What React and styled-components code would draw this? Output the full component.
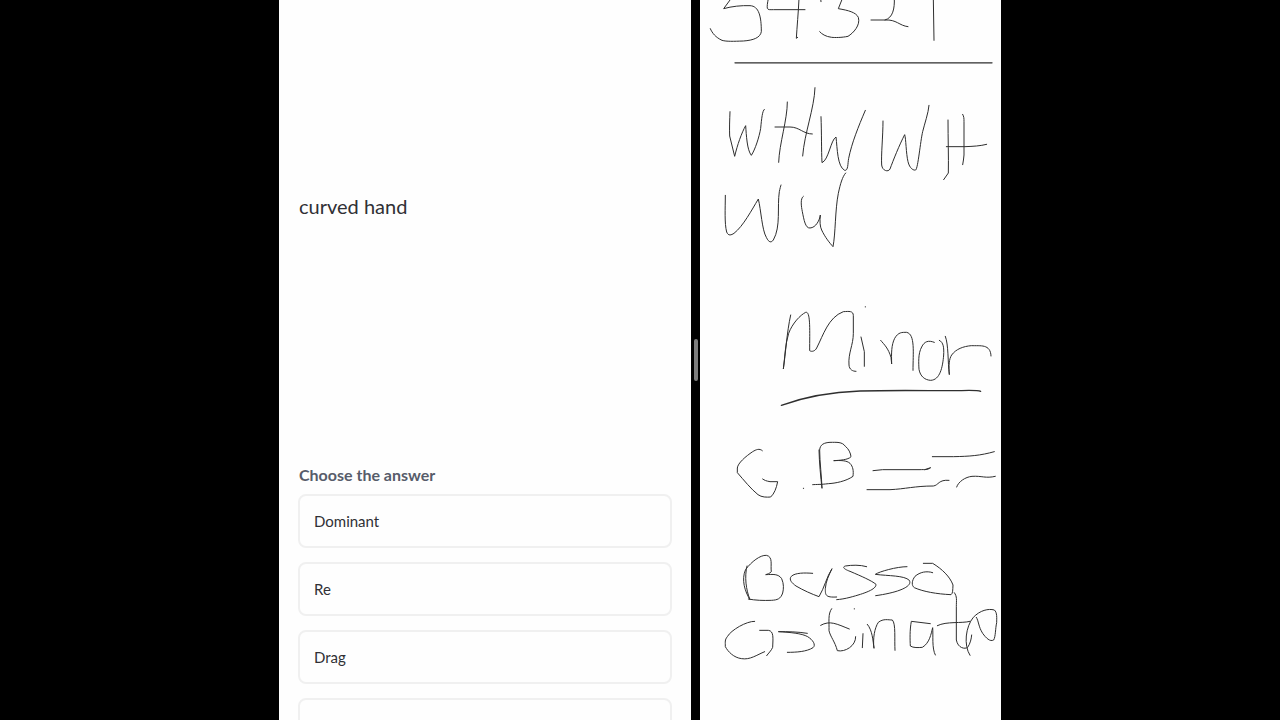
import styled, { createGlobalStyle } from "styled-components";

const GlobalStyle = createGlobalStyle`
  * {
    box-sizing: border-box;
  }

  body {
    margin: 0;
    background: #000;
    font-family: Lato, "Open Sans", sans-serif;
  }
`;

const Wrapper = styled.main`
  display: grid;
  grid-template-columns: 412fr 9px 301fr;
  max-width: 722px;
  height: 100vh;
  margin: 0 auto;
  overflow: hidden;
`;

const Pane = styled.section`
  min-width: 0;
  overflow: hidden;
  background: #fefefe;
`;

const Question = styled(Pane)`
  padding: 0 19px;
`;

const Prompt = styled.div`
  display: flex;
  align-items: center;
  min-height: 412px;
  padding-left: 1px;
  color: #303035;
  font-size: 20px;
  line-height: 24px;
`;

const Title = styled.h2`
  margin: 0;
  padding: 51px 0 7px 1px;
  color: #575c6a;
  font-size: 16px;
  font-weight: 700;
  line-height: 24px;
`;

const Options = styled.div`
  display: flex;
  flex-direction: column;
  gap: 14px;
`;

const Option = styled.button`
  height: 54px;
  flex-shrink: 0;
  padding: 0 14px;
  border: 2px solid #f0f0f0;
  border-radius: 8px;
  background: #fefefe;
  color: #303035;
  font-family: inherit;
  font-size: 15px;
  line-height: 20px;
  text-align: left;
  cursor: pointer;
`;

const Divider = styled.div`
  display: flex;
  align-items: center;
  justify-content: center;
  background: #000;
`;

const Handle = styled.div`
  width: 4px;
  height: 42px;
  border-radius: 2px;
  background: #7d7d7d;
`;

const Ink = styled.svg`
  display: block;
  width: 100%;
  fill: none;
  stroke: #2e2e2e;
  stroke-linecap: round;
  stroke-linejoin: round;
`;

const options = ["Dominant", "Re", "Drag", "Legato"];

// pen strokes of the notes, one entry for each written line
const notes = [
  {
    name: "54321",
    x: -45,
    y: 0,
    strokes: [
      "M138 -4L116 26C140 19 170 16 195 17C222 18 229 50 229 95C226 113 205 121 175 123C145 124 125 125 111 121C92 112 82 100 76 86",
      "M250 -4C247 10 246 20 247 25C249 30 255 29 265 29H360M342 -4C340 40 336 80 334 115L338 112",
      "M407 -4L408 5M472 -4L460 26C490 31 513 37 520 52C527 76 505 99 489 109C470 113 450 113 440 112C422 110 410 102 404 95",
      "M628 -4C629 25 624 54 600 60M558 60H600C635 58 642 77 669 80",
      "M745 -4L747 121",
    ],
  },
  {
    name: "rule",
    x: -45,
    y: 0,
    strokes: ["M150 188.500H921"],
    weight: 4,
  },
  {
    name: "WHW",
    x: 0,
    y: 240,
    strokes: [
      "M90 95C89 120 88 145 89 168L104 229C112 195 125 158 137 137C139 165 141 210 154 226C165 210 178 170 182 145C185 115 187 92 193 88",
      "M262 66C262 120 238 190 236 247M345 23C343 85 313 160 308 228M225 141H270C298 141 310 162 337 162",
      "M363 110C365 160 364 210 366 248C386 240 392 180 408 171C412 205 412 260 434 271C445 273 443 250 446 235C455 190 475 140 496 91",
    ],
  },
  {
    name: "WH",
    x: 450,
    y: 240,
    strokes: [
      "M99 123C99 170 93 225 95 255C97 273 115 277 120 267C130 240 148 195 164 164C168 175 168 220 174 245C179 266 191 272 197 270C204 265 211 185 218 155C224 130 235 100 237 76",
      "M294 120C294 175 296 230 295 279L281 299M338 103C342 110 342 115 342 125V225C342 235 339 245 338 254M289 200H345C370 199 390 198 410 193",
    ],
  },
  {
    name: "WW",
    x: 0,
    y: 240,
    strokes: [
      "M76 346C76 385 73 430 80 456C85 469 94 465 102 460C130 438 155 390 175 357C183 390 186 450 199 472C207 489 214 488 220 480C243 440 231 380 238 335C240 325 242 318 243 315",
      "M310 349C300 355 304 380 307 395C312 420 316 445 330 444C348 443 359 420 361 405C359 425 360 440 365 450C375 472 390 490 399 500C407 460 405 390 415 340C421 312 427 290 437 279",
    ],
  },
  {
    name: "Minor",
    x: 195,
    y: 870,
    strokes: [
      "M77 75C65 130 62 190 55 237C60 200 60 165 71 130C82 100 106 75 122 67C137 63 134 120 134 182C140 186 150 184 155 174C175 135 190 82 235 65C252 64 265 62 265 77V130C265 165 249 190 252 225C253 239 263 244 273 244",
      "M288 141L298 185V229M301 50V51",
      "M347 151C358 164 370 175 378 202L380 222C379 190 379 165 389 145C400 126 411 127 425 127C451 133 444 188 444 241",
      "M508 157C490 150 478 154 470 171C459 190 461 220 462 238C466 260 480 270 497 271C525 270 533 232 536 195C537 174 536 157 523 151",
      "M541 139C551 165 548 215 553 254C551 226 552 207 560 195C573 177 595 169 619 167C646 168 677 161 678 198",
    ],
  },
  {
    name: "underline",
    x: 195,
    y: 870,
    strokes: [
      "M49 346C115 322 200 306 285 303C380 300 480 302 575 302C620 301 638 300 647 304",
    ],
    weight: 4,
  },
  {
    name: "GB",
    x: 60,
    y: 1290,
    strokes: [
      "M127 62C118 54 108 59 98 65C77 79 53 100 52 114V128C72 151 93 177 114 194C125 202 140 202 152 201C163 191 169 175 173 155H150C138 153 134 151 128 147",
      "M250 175H251M297 60C298 100 302 140 306 175C305 140 299 95 299 60C300 43 313 38 330 37C350 37 367 35 376 49C386 56 392 70 393 80C385 90 357 91 341 92C362 91 380 91 390 100C399 110 401 122 399 139C378 154 345 160 325 161C302 164 290 163 278 164",
      "M459 122L488 119H600C615 118 620 121 632 113L614 119M441 179H510C555 177 585 168 640 168C656 166 655 148 687 151",
      "M637 80H700C750 79 780 77 823 65M710 171C715 155 736 141 756 139C785 137 797 146 826 139",
    ],
  },
  {
    name: "Ba",
    x: 45,
    y: 1620,
    strokes: [
      "M96 78C88 110 93 150 105 179C90 155 78 119 92 88C110 65 135 45 154 46C175 50 166 75 169 95C163 101 158 102 152 104C174 103 190 101 200 116C207 132 206 147 203 159C197 177 187 180 169 181C145 182 120 181 100 177",
      "M293 100C270 98 240 98 229 109C220 119 232 130 243 138C265 151 290 162 312 170C328 144 335 110 351 86C341 107 333 123 331 145C331 165 330 173 365 171",
    ],
  },
  {
    name: "sso",
    x: 450,
    y: 1620,
    strokes: [
      "M50 80C30 74 5 75 -14 78C-26 82 -14 89 0 94C35 109 65 122 78 133C79 148 45 160 0 172C-15 176 -28 178 -40 179",
      "M171 80C140 80 87 95 76 103C115 108 163 106 178 121C189 140 143 158 77 167",
      "M248 98C230 92 210 96 195 109C185 122 184 137 193 143C220 155 260 162 303 164C309 160 308 150 309 135C300 110 276 87 248 70H220",
    ],
  },
  {
    name: "Osti",
    x: 45,
    y: 1620,
    strokes: [
      "M119 244C95 243 48 270 37 290C29 300 31 305 31 320C39 335 56 353 80 356C105 360 125 345 149 335M134 271H160C177 273 174 295 173 322C169 332 160 340 155 347",
      "M277 280C247 275 220 275 190 275C225 277 260 280 278 290C293 299 304 315 294 323C275 335 245 337 217 337",
      "M350 206C338 222 343 245 342 272C346 290 360 305 367 332C390 337 423 318 422 290M317 256C345 240 365 252 403 267",
      "M444 281L442 323M418 206V207",
    ],
  },
  {
    name: "nato",
    x: 450,
    y: 1620,
    strokes: [
      "M52 253C67 270 69 302 72 325C68 296 74 263 85 247C100 235 115 240 127 240C138 251 133 299 135 331",
      "M241 251L184 244C179 270 180 300 181 318C190 324 205 323 217 322C239 309 243 282 248 263C250 285 245 325 256 345",
      "M313 158C322 170 319 180 319 200V300C324 325 345 328 353 322C361 310 364 297 365 285M262 257C290 243 335 251 360 244",
      "M360 346C340 315 347 260 370 232C390 211 415 205 433 210C442 217 440 235 440 248C436 265 437 290 431 300C420 306 408 294 398 280C385 260 386 242 379 232",
    ],
  },
];

const Notes = () => (
  <Ink viewBox="0 0 903 2160" role="img" aria-label="Handwritten notes">
    {notes.map(({ name, x, y, strokes, weight = 3 }) => (
      <g key={name} transform={`translate(${x} ${y})`} strokeWidth={weight}>
        {strokes.map((d) => (
          <path key={d} d={d} />
        ))}
      </g>
    ))}
  </Ink>
);

const App = () => (
  <>
    <GlobalStyle />
    <Wrapper>
      <Question>
        <Prompt>curved hand</Prompt>
        <Title>Choose the answer</Title>
        <Options>
          {options.map((option) => (
            <Option key={option} type="button">
              {option}
            </Option>
          ))}
        </Options>
      </Question>
      <Divider role="separator" aria-orientation="vertical">
        <Handle />
      </Divider>
      <Pane>
        <Notes />
      </Pane>
    </Wrapper>
  </>
);

export default App;
